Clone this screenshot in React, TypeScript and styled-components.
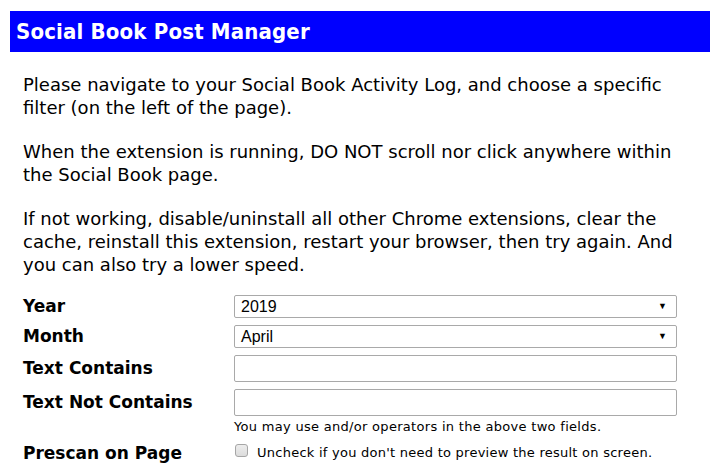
import React from 'react';
import styled, {createGlobalStyle} from 'styled-components';

const GlobalStyle = createGlobalStyle`
  body {
    margin: 0;
    background: #ffffff;
    font-family: "DejaVu Sans", Verdana, sans-serif;
    color: #000000;
  }
`;

const Page = styled.div`
  padding: 11px 10px 0 10px;
  width: 700px;
`;

const Header = styled.h1`
  margin: 0;
  height: 41px;
  line-height: 41px;
  padding-left: 6px;
  background-color: #0000ff;
  color: #ffffff;
  font-family: "DejaVu Sans Condensed", "DejaVu Sans", sans-serif;
  font-size: 22px;
  letter-spacing: 0.17px;
  font-weight: bold;
`;

const Body = styled.div`
  padding: 21px 20px 0 13px;
`;

const Para = styled.p`
  margin: 0 0 21px 0;
  font-size: 18px;
  line-height: 23px;
`;

const Form = styled.div`
  margin-top: -2px;
  display: grid;
  grid-template-columns: 211px 443px;
  align-items: start;
  row-gap: 7px;
`;

const Label = styled.div<{ $h: number }>`
  font-size: 17px;
  font-weight: bold;
  line-height: ${p => p.$h}px;
`;

const SelectBox = styled.div`
  position: relative;
  height: 23px;
  box-sizing: border-box;
  border: 1px solid #a9a9a9;
  border-radius: 2px;
  font-family: "Liberation Sans", Arial, sans-serif;
  font-size: 16px;
  line-height: 21px;
  padding-left: 6px;
`;

const Arrow = styled.span`
  position: absolute;
  right: 9px;
  top: 0;
  font-size: 9px;
`;

const TextInput = styled.input`
  display: block;
  height: 27px;
  box-sizing: border-box;
  border: 1px solid #a9a9a9;
  border-radius: 2px;
  width: 100%;
  margin: 0;
`;

const FieldCell = styled.div`
  display: flex;
  flex-direction: column;
`;

const Hint = styled.div`
  font-size: 13px;
  letter-spacing: 0.3px;
  line-height: 18px;
  padding-top: 2px;
`;

const CheckRow = styled.label`
  display: flex;
  align-items: center;
  gap: 9px;
  height: 18px;
  font-size: 13px;
  letter-spacing: 0.25px;
`;

const Check = styled.input`
  appearance: none;
  margin: 0 0 4px 1px;
  width: 13px;
  height: 13px;
  box-sizing: border-box;
  border: 1px solid #a6a6a6;
  border-radius: 3px;
  background: linear-gradient(#ededed, #dcdcdc);
`;

export default function App() {
    return (
        <>
            <GlobalStyle/>
            <Page>
                <Header>Social Book Post Manager</Header>
                <Body>
                    <Para>Please navigate to your Social Book Activity Log, and choose a specific filter (on the left of the page).</Para>
                    <Para>When the extension is running, DO NOT scroll nor click anywhere within the Social Book page.</Para>
                    <Para>If not working, disable/uninstall all other Chrome extensions, clear the cache, reinstall this extension, restart your browser, then try again. And you can also try a lower speed.</Para>
                    <Form>
                        <Label $h={23}>Year</Label>
                        <SelectBox>2019<Arrow>▼</Arrow></SelectBox>
                        <Label $h={23}>Month</Label>
                        <SelectBox>April<Arrow>▼</Arrow></SelectBox>
                        <Label $h={27}>Text Contains</Label>
                        <TextInput type="text"/>
                        <Label $h={27}>Text Not Contains</Label>
                        <FieldCell>
                            <TextInput type="text"/>
                            <Hint>You may use and/or operators in the above two fields.</Hint>
                        </FieldCell>
                        <Label $h={20}>Prescan on Page</Label>
                        <CheckRow><Check type="checkbox"/>Uncheck if you don't need to preview the result on screen.</CheckRow>
                    </Form>
                </Body>
            </Page>
        </>
    );
}
